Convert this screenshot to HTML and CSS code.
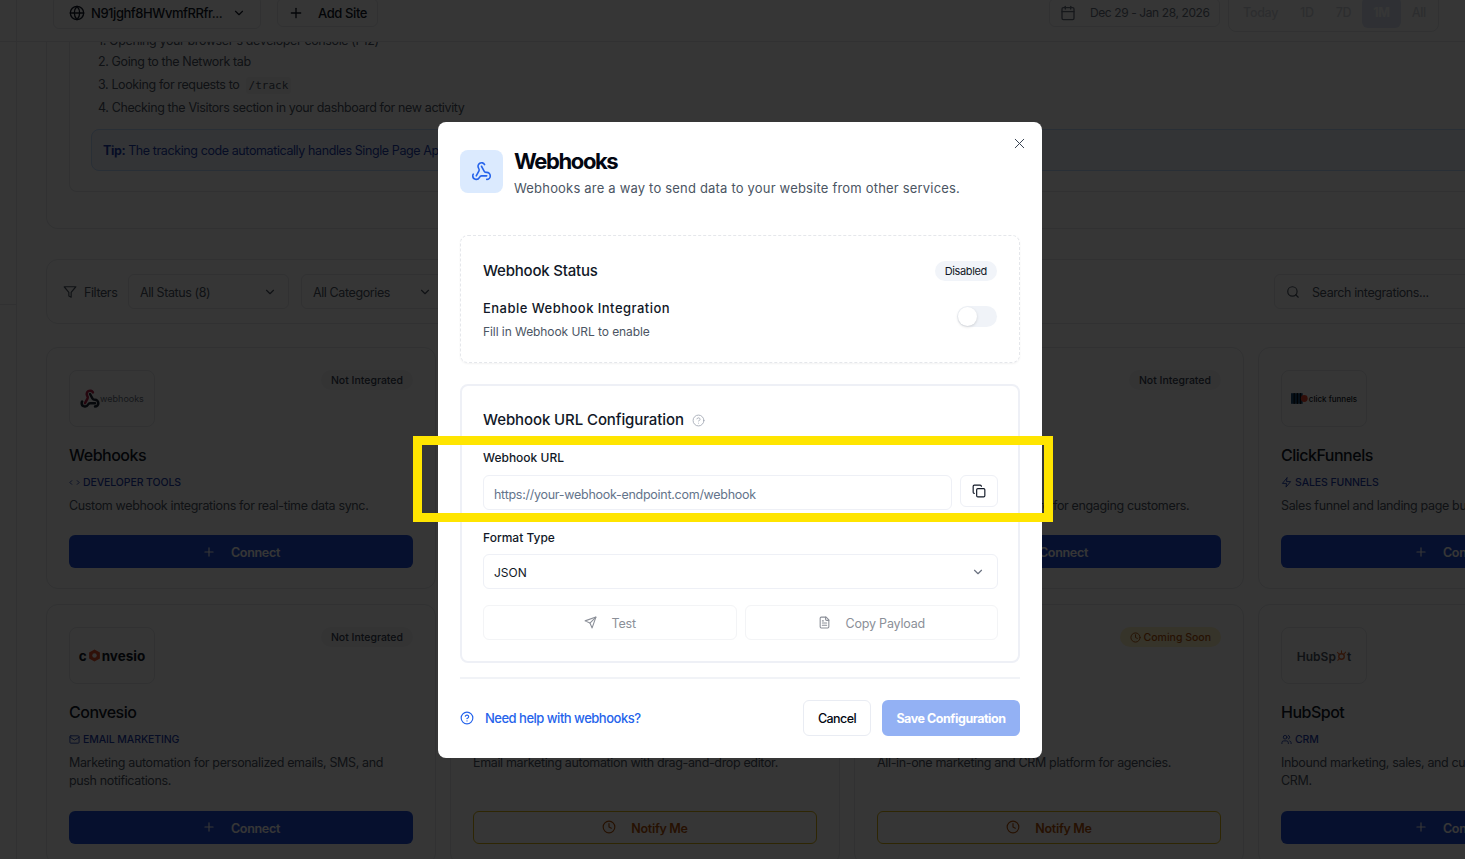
FILE: index.html
```html
<!DOCTYPE html>
<html lang="en">
<head>
    <meta charset="UTF-8">
    <meta name="viewport" content="width=device-width, initial-scale=1.0">
    <title>Webhooks</title>
    <link rel="stylesheet" href="styles.css">
</head>
<body>
    <!-- Shared icons -->
    <svg class="icon-defs" aria-hidden="true">
        <symbol id="i-webhook" viewBox="0 0 24 24"><path d="M18 16.98h-5.99c-1.1 0-1.95.94-2.48 1.9A4 4 0 0 1 2 17c.01-.7.2-1.4.57-2"/><path d="m6 17 3.13-5.78c.53-.97.1-2.18-.5-3.1a4 4 0 1 1 6.89-4.06"/><path d="m12 6 3.13 5.73C15.66 12.7 16.9 13 18 13a4 4 0 0 1 0 8"/></symbol>
        <symbol id="i-help" viewBox="0 0 24 24"><circle cx="12" cy="12" r="10"/><path d="M9.09 9a3 3 0 0 1 5.83 1c0 2-3 3-3 3"/><path d="M12 17h.01"/></symbol>
        <symbol id="i-chevron" viewBox="0 0 24 24"><path d="m6 9 6 6 6-6"/></symbol>
        <symbol id="i-plus" viewBox="0 0 24 24"><path d="M5 12h14"/><path d="M12 5v14"/></symbol>
        <symbol id="i-clock" viewBox="0 0 24 24"><circle cx="12" cy="12" r="10"/><path d="M12 6v6l4 2"/></symbol>
        <symbol id="i-x" viewBox="0 0 24 24"><path d="M18 6 6 18"/><path d="m6 6 12 12"/></symbol>
    </svg>

    <div class="page">
        <aside class="rail"><div class="rail-top"></div><div class="rail-mid"></div></aside>
        <main class="main">
            <header class="topbar">
                <div class="site-select">
                    <svg class="ic16" viewBox="0 0 24 24"><circle cx="12" cy="12" r="10"/><path d="M12 2a14.5 14.5 0 0 0 0 20 14.5 14.5 0 0 0 0-20"/><path d="M2 12h20"/></svg>
                    <span class="site-name">N91jghf8HWvmfRRfr...</span>
                    <svg class="ic14"><use href="#i-chevron"/></svg>
                </div>
                <div class="add-site">
                    <svg class="ic16"><use href="#i-plus"/></svg>
                    <span>Add Site</span>
                </div>
                <div class="date-range">
                    <svg class="ic16" viewBox="0 0 24 24"><path d="M8 2v4"/><path d="M16 2v4"/><rect x="3" y="4" width="18" height="18" rx="2"/><path d="M3 10h18"/></svg>
                    <span>Dec 29 - Jan 28, 2026</span>
                </div>
                <div class="range-tabs">
                    <span class="range-tab">Today</span>
                    <span class="range-tab">1D</span>
                    <span class="range-tab">7D</span>
                    <span class="range-tab active">1M</span>
                    <span class="range-tab">All</span>
                </div>
            </header>

            <div class="content">
                <section class="setup-panel">
                    <div class="setup-inner">
                        <ol class="steps">
                            <li>1. Opening your browser's developer console (F12)</li>
                            <li>2. Going to the Network tab</li>
                            <li>3. Looking for requests to <code>/track</code></li>
                            <li>4. Checking the Visitors section in your dashboard for new activity</li>
                        </ol>
                        <div class="tip"><strong>Tip:</strong> The tracking code automatically handles Single Page Applications and route changes.</div>
                    </div>
                </section>

                <section class="filters">
                    <div class="filters-label">
                        <svg class="ic14" viewBox="0 0 24 24"><polygon points="22 3 2 3 10 12.46 10 19 14 21 14 12.46 22 3"/></svg>
                        <span>Filters</span>
                    </div>
                    <div class="filter-select status"><span>All Status (8)</span><svg class="ic14"><use href="#i-chevron"/></svg></div>
                    <div class="filter-select categories"><span>All Categories</span><svg class="ic14"><use href="#i-chevron"/></svg></div>
                    <div class="search">
                        <svg class="ic14" viewBox="0 0 24 24"><circle cx="11" cy="11" r="8"/><path d="m21 21-4.3-4.3"/></svg>
                        <span>Search integrations...</span>
                    </div>
                </section>

                <section class="grid">
                    <!-- Row 1 -->
                    <article class="card">
                        <div class="card-top">
                            <div class="logo">
                                <svg class="logo-hook" viewBox="0 0 24 24">
                                    <path d="M18 16.98h-5.99c-1.1 0-1.95.94-2.48 1.9A4 4 0 0 1 2 17c.01-.7.2-1.4.57-2"/>
                                    <path class="logo-hook-top" d="m6 17 3.13-5.78c.53-.97.1-2.18-.5-3.1a4 4 0 1 1 6.89-4.06"/>
                                    <path d="m12 6 3.13 5.73C15.66 12.7 16.9 13 18 13a4 4 0 0 1 0 8"/>
                                </svg>
                                <span class="logo-webhooks">webhooks</span>
                            </div>
                            <span class="badge">Not Integrated</span>
                        </div>
                        <h3>Webhooks</h3>
                        <div class="category">
                            <svg viewBox="0 0 24 24"><path d="m18 16 4-4-4-4"/><path d="m6 8-4 4 4 4"/></svg>
                            <span>DEVELOPER TOOLS</span>
                        </div>
                        <p>Custom webhook integrations for real-time data sync.</p>
                        <button class="connect"><svg class="ic14"><use href="#i-plus"/></svg><span>Connect</span></button>
                    </article>

                    <article class="card">
                        <div class="card-top"><div class="logo"></div></div>
                        <h3></h3>
                        <div class="category"></div>
                        <p></p>
                        <button class="connect"></button>
                    </article>

                    <article class="card">
                        <div class="card-top"><div class="logo"></div><span class="badge">Not Integrated</span></div>
                        <h3></h3>
                        <div class="category"></div>
                        <p>Live chat and support software for engaging customers.</p>
                        <button class="connect"><svg class="ic14"><use href="#i-plus"/></svg><span>Connect</span></button>
                    </article>

                    <article class="card">
                        <div class="card-top">
                            <div class="logo">
                                <svg class="logo-cf" viewBox="0 0 16 10"><rect x="0" y="0" width="11" height="10" fill="#1f4e79"/><path d="M3 0v10M6 0v10M9 0v10" stroke="#0b0b0b" stroke-width="1"/><circle cx="12.5" cy="5" r="3.2" fill="#e8452c"/></svg>
                                <span class="logo-clickfunnels">click funnels</span>
                            </div>
                            <span class="badge">Not Integrated</span>
                        </div>
                        <h3>ClickFunnels</h3>
                        <div class="category">
                            <svg viewBox="0 0 24 24"><path d="M13 2 3 14h9l-1 8 10-12h-9l1-8z"/></svg>
                            <span>SALES FUNNELS</span>
                        </div>
                        <p>Sales funnel and landing page builder.</p>
                        <button class="connect"><svg class="ic14"><use href="#i-plus"/></svg><span>Connect</span></button>
                    </article>

                    <!-- Row 2 -->
                    <article class="card">
                        <div class="card-top">
                            <div class="logo">
                                <span class="logo-convesio">c<svg class="logo-hex" viewBox="0 0 14 14"><path d="M7 .5 12.8 3.8v6.4L7 13.5 1.2 10.2V3.8z" fill="#e2502b"/><circle cx="7" cy="7" r="2.4" fill="#fff"/></svg>nvesio</span>
                            </div>
                            <span class="badge">Not Integrated</span>
                        </div>
                        <h3>Convesio</h3>
                        <div class="category">
                            <svg viewBox="0 0 24 24"><rect x="2" y="4" width="20" height="16" rx="2"/><path d="m22 7-8.97 5.7a1.94 1.94 0 0 1-2.06 0L2 7"/></svg>
                            <span>EMAIL MARKETING</span>
                        </div>
                        <p>Marketing automation for personalized emails, SMS, and push notifications.</p>
                        <button class="connect"><svg class="ic14"><use href="#i-plus"/></svg><span>Connect</span></button>
                    </article>

                    <article class="card">
                        <div class="card-top"><div class="logo"></div></div>
                        <h3></h3>
                        <div class="category"></div>
                        <p>Email marketing automation with drag-and-drop editor.</p>
                        <button class="notify"><svg class="ic14"><use href="#i-clock"/></svg><span>Notify Me</span></button>
                    </article>

                    <article class="card">
                        <div class="card-top">
                            <div class="logo"></div>
                            <span class="badge soon"><svg class="ic11"><use href="#i-clock"/></svg>Coming Soon</span>
                        </div>
                        <h3></h3>
                        <div class="category"></div>
                        <p>All-in-one marketing and CRM platform for agencies.</p>
                        <button class="notify"><svg class="ic14"><use href="#i-clock"/></svg><span>Notify Me</span></button>
                    </article>

                    <article class="card">
                        <div class="card-top">
                            <div class="logo">
                                <span class="logo-hubspot">HubSp<svg class="logo-sprocket" viewBox="0 0 16 18"><circle cx="8" cy="10.500" r="4" fill="none" stroke="#e8662c" stroke-width="2"/><path d="M8 6V2M5 13.5 2.5 16M11 7.5 14 4M5 7.5 2 4.500" stroke="#e8662c" stroke-width="1.5" fill="none"/></svg>t</span>
                            </div>
                            <span class="badge">Not Integrated</span>
                        </div>
                        <h3>HubSpot</h3>
                        <div class="category">
                            <svg viewBox="0 0 24 24"><path d="M16 21v-2a4 4 0 0 0-4-4H6a4 4 0 0 0-4 4v2"/><circle cx="9" cy="7" r="4"/><path d="M22 21v-2a4 4 0 0 0-3-3.87"/><path d="M16 3.13a4 4 0 0 1 0 7.75"/></svg>
                            <span>CRM</span>
                        </div>
                        <p>Inbound marketing, sales, and customer service platform CRM.</p>
                        <button class="connect"><svg class="ic14"><use href="#i-plus"/></svg><span>Connect</span></button>
                    </article>
                </section>
            </div>
        </main>
    </div>

    <!-- Dialog -->
    <div class="overlay">
        <div class="modal">
            <button class="modal-close"><svg><use href="#i-x"/></svg></button>
            <div class="modal-head">
                <div class="modal-icon"><svg viewBox="0 0 24 24"><use href="#i-webhook"/></svg></div>
                <div>
                    <h2>Webhooks</h2>
                    <p class="modal-sub">Webhooks are a way to send data to your website from other services.</p>
                </div>
            </div>

            <div class="status-card">
                <div class="row-between">
                    <h4>Webhook Status</h4>
                    <span class="pill">Disabled</span>
                </div>
                <div class="row-between enable-row">
                    <div>
                        <div class="enable-title">Enable Webhook Integration</div>
                        <div class="enable-note">Fill in Webhook URL to enable</div>
                    </div>
                    <div class="toggle"><span class="knob"></span></div>
                </div>
            </div>

            <div class="config-card">
                <h4 class="config-title">Webhook URL Configuration <svg class="config-help"><use href="#i-help"/></svg></h4>
                <label class="field-label">Webhook URL</label>
                <div class="url-row">
                    <div class="url-input">https://your-webhook-endpoint.com/webhook</div>
                    <button class="copy-btn">
                        <svg class="ic14" viewBox="0 0 24 24"><rect x="8" y="8" width="14" height="14" rx="2"/><path d="M4 16c-1.100 0-2-.9-2-2V4c0-1.100.9-2 2-2h10c1.100 0 2 .9 2 2"/></svg>
                    </button>
                </div>
                <label class="field-label format-label">Format Type</label>
                <div class="format-select"><span>JSON</span><svg class="ic14"><use href="#i-chevron"/></svg></div>
                <div class="action-row">
                    <button class="action-btn">
                        <svg class="ic13" viewBox="0 0 24 24"><path d="m22 2-7 20-4-9-9-4Z"/><path d="M22 2 11 13"/></svg>
                        <span>Test</span>
                    </button>
                    <button class="action-btn">
                        <svg class="ic13" viewBox="0 0 24 24"><path d="M15 2H6a2 2 0 0 0-2 2v16a2 2 0 0 0 2 2h12a2 2 0 0 0 2-2V7Z"/><path d="M14 2v4a2 2 0 0 0 2 2h4"/><path d="M16 13H8"/><path d="M16 17H8"/><path d="M10 9H8"/></svg>
                        <span>Copy Payload</span>
                    </button>
                </div>
            </div>

            <div class="modal-divider"></div>

            <div class="modal-foot">
                <a class="help-link" href="#"><svg class="ic14"><use href="#i-help"/></svg>Need help with webhooks?</a>
                <div class="foot-btns">
                    <button class="btn-cancel">Cancel</button>
                    <button class="btn-save">Save Configuration</button>
                </div>
            </div>
        </div>
    </div>

    <!-- Highlight frame from the annotated screenshot -->
    <div class="highlight"></div>
</body>
</html>
```

FILE: styles.css
```css
* {
    box-sizing: border-box;
}
html, body {
    margin: 0;
    height: 100%;
    overflow: hidden;
}
body {
    position: relative;
    background-color: #fff;
    color: #111827;
    font-family: "Inter", "Noto Sans", sans-serif;
    font-size: 13px;
}
h2, h3, h4, p, ol {
    margin: 0;
    padding: 0;
}
button {
    font-family: inherit;
}
svg {
    fill: none;
    stroke: currentColor;
    stroke-width: 2;
    stroke-linecap: round;
    stroke-linejoin: round;
    flex: none;
}
.icon-defs {
    display: none;
}
.ic16 { width: 16px; height: 16px; }
.ic14 { width: 14px; height: 14px; }
.ic13 { width: 13px; height: 13px; }
.ic11 { width: 11px; height: 11px; }

/* page behind the dialog */
.page {
    display: flex;
    height: 100vh;
}
.rail {
    width: 17px;
    flex: none;
    border-right: 1px solid #e5e7eb;
}
.rail-top {
    height: 42px;
    border-bottom: 1px solid #e5e7eb;
}
.rail-mid {
    height: 263px;
    border-bottom: 1px solid #e5e7eb;
}
.main {
    flex: 1;
    min-width: 0;
    display: flex;
    flex-direction: column;
}
.topbar {
    height: 42px;
    flex: none;
    display: flex;
    align-items: flex-end;
    padding: 0 26px 9px 36px;
    border-bottom: 1px solid #e5e7eb;
}
.site-select, .add-site, .date-range {
    display: flex;
    align-items: center;
    border: 1px solid #e5e7eb;
    border-radius: 6px;
    height: 33px;
    margin-bottom: 3px;
    font-size: 13px;
    font-weight: 500;
    color: #111827;
    white-space: nowrap;
}
.site-select {
    width: 208px;
    padding: 0 14px 0 15px;
    gap: 6px;
}
.site-name {
    flex: 1;
    letter-spacing: -.45px;
}
.add-site {
    width: 101px;
    height: 29px;
    margin-left: 16px;
    margin-bottom: 5px;
    padding-left: 10px;
    gap: 14px;
    letter-spacing: -.4px;
}
.date-range {
    width: 171px;
    height: 29px;
    margin-bottom: 5px;
    margin-left: auto;
    padding-left: 10px;
    gap: 14px;
    font-size: 12px;
    font-weight: 400;
    color: #6b7280;
    letter-spacing: -.4px;
}
.range-tabs {
    display: flex;
    align-items: flex-end;
    width: 211px;
    height: 40px;
    margin-left: 8px;
    padding: 0 0 3px 3px;
    border: 1px solid #e5e7eb;
    border-radius: 8px;
    color: #d1d5db;
    font-size: 12.5px;
    font-weight: 500;
    letter-spacing: -.3px;
}
.range-tab {
    height: 31px;
    display: flex;
    align-items: center;
    padding: 0 11px;
}
.range-tab.active {
    background-color: #dbe4f5;
    border-radius: 6px;
    color: #fff;
    font-weight: 700;
}

.content {
    flex: 1;
    overflow: hidden;
    padding-left: 29px;
}
.setup-panel {
    width: 1602px;
    padding: 0 22px 36px;
    border: 1px solid #e5e7eb;
    border-top: none;
    border-radius: 0 0 12px 12px;
}
.setup-inner {
    padding: 0 21px 20px;
    border: 1px solid #e5e7eb;
    border-top: none;
    border-radius: 0 0 8px 8px;
}
.steps {
    list-style: none;
    margin-top: -12.5px;
    padding-left: 7px;
    color: #4b5563;
    font-size: 12.5px;
    line-height: 21px;
    letter-spacing: -.38px;
}
.steps li {
    height: 21px;
}
.steps li + li + li {
    margin-top: 2px;
}
.steps code {
    margin-left: 3px;
    padding: 2px 3px;
    background-color: #f3f4f6;
    border-radius: 3px;
    font-family: "DejaVu Sans Mono", monospace;
    font-size: 11px;
    letter-spacing: 0;
}
.tip {
    display: flex;
    gap: 3px;
    align-items: center;
    height: 42px;
    margin-top: 11.5px;
    padding: 0 11px;
    background-color: #eff6ff;
    border: 1px solid #bfdbfe;
    border-radius: 8px;
    color: #1e40af;
    font-size: 12.5px;
    letter-spacing: -.4px;
    white-space: nowrap;
}
.tip strong {
    font-weight: 700;
}

.filters {
    width: 1602px;
    display: flex;
    align-items: center;
    height: 65px;
    margin-top: 30px;
    padding: 0 16px;
    border: 1px solid #e5e7eb;
    border-radius: 12px;
    color: #4b5563;
    font-size: 12.5px;
    letter-spacing: -.4px;
}
.filters span {
    padding-top: 2px;
}
.filters-label {
    display: flex;
    align-items: center;
    gap: 7px;
    width: 65px;
}
.filter-select {
    display: flex;
    align-items: center;
    justify-content: space-between;
    height: 35px;
    padding: 0 11px;
    border: 1px solid #e5e7eb;
    border-radius: 6px;
}
.filter-select.status { width: 161px; }
.filter-select.categories { width: 143px; margin-left: 12px; }
.search {
    display: flex;
    align-items: center;
    gap: 12px;
    width: 300px;
    height: 35px;
    margin-left: 830px;
    padding-left: 11px;
    border: 1px solid #e5e7eb;
    border-radius: 6px;
}

.grid {
    display: grid;
    grid-template-columns: repeat(4, 390px);
    gap: 15px 14px;
    margin-top: 23px;
}
.card {
    display: flex;
    flex-direction: column;
    padding: 22px 22px 20px;
    border: 1px solid #e5e7eb;
    border-radius: 12px;
}
.card-top {
    display: flex;
    justify-content: space-between;
    align-items: flex-start;
    height: 57px;
}
.logo {
    display: flex;
    align-items: center;
    justify-content: center;
    width: 86px;
    height: 57px;
    border: 1px solid #e5e7eb;
    border-radius: 8px;
}
.logo-hook {
    width: 20px;
    height: 20px;
    color: #1f2937;
    stroke-width: 3;
}
.logo-hook-top {
    stroke: #b5234a;
}
.logo-webhooks {
    font-size: 9px;
    color: #6b7280;
}
.logo-cf {
    width: 17px;
    height: 11px;
    stroke: none;
    margin-right: 1px;
}
.logo-clickfunnels {
    font-size: 8px;
    font-weight: 500;
    color: #111827;
}
.logo-convesio {
    display: flex;
    align-items: center;
    font-size: 13.5px;
    font-weight: 700;
    color: #111827;
}
.logo-hex {
    width: 13px;
    height: 13px;
    stroke: none;
    margin: 0 1px;
}
.logo-hubspot {
    display: flex;
    align-items: flex-end;
    font-size: 12px;
    font-weight: 600;
    color: #4b5563;
}
.logo-sprocket {
    width: 11px;
    height: 17px;
    stroke: none;
}
.badge {
    display: inline-flex;
    align-items: center;
    gap: 3px;
    height: 20px;
    padding: 0 10px;
    background-color: #f3f4f6;
    border-radius: 10px;
    font-size: 10.5px;
    font-weight: 500;
    color: #374151;
}
.badge.soon {
    background-color: #fef3c7;
    color: #b45309;
}
.card h3 {
    height: 24px;
    margin-top: 16px;
    font-size: 16px;
    font-weight: 500;
    line-height: 24px;
    letter-spacing: -.5px;
    color: #111827;
}
.category {
    display: flex;
    align-items: center;
    gap: 3px;
    height: 16px;
    margin-top: 7px;
    font-size: 10.5px;
    font-weight: 500;
    letter-spacing: -.1px;
    color: #1e40af;
}
.category svg {
    width: 11px;
    height: 11px;
}
.card p {
    min-height: 18.5px;
    margin-top: 6.5px;
    margin-bottom: 20px;
    font-size: 12.5px;
    line-height: 18.5px;
    letter-spacing: -.35px;
    color: #4b5563;
}
.connect, .notify {
    display: flex;
    align-items: center;
    justify-content: center;
    gap: 15px;
    height: 33px;
    margin-top: auto;
    border-radius: 6px;
    font-size: 12.5px;
    font-weight: 600;
    letter-spacing: -.3px;
}
.connect span, .notify span {
    padding-top: 2px;
}
.connect {
    background-color: #1d4ed8;
    border: none;
    color: #fff;
}
.notify {
    background-color: transparent;
    border: 1px solid #d9b310;
    color: #b45309;
}

/* dialog */
.overlay {
    position: absolute;
    inset: 0;
    padding: 122px 0 0 438px;
    background-color: rgba(0, 0, 0, .79);
}
.modal {
    position: relative;
    width: 604px;
    padding: 25px 22px 22px;
    background-color: #fff;
    border-radius: 8px;
}
.modal-close {
    position: absolute;
    top: 13px;
    right: 14px;
    padding: 0;
    display: flex;
    background: none;
    border: none;
    color: #374151;
}
.modal-close svg {
    width: 17px;
    height: 17px;
    stroke-width: 1.4;
}
.modal-head {
    display: flex;
    gap: 11px;
    margin-bottom: 37px;
}
.modal-icon {
    display: flex;
    align-items: center;
    justify-content: center;
    width: 43px;
    height: 43px;
    margin-top: 3px;
    background-color: #dbeafe;
    border-radius: 8px;
    color: #2563eb;
}
.modal-icon svg {
    width: 21px;
    height: 21px;
    stroke-width: 1.8;
}
.modal h2 {
    font-size: 22px;
    font-weight: 700;
    line-height: 28px;
    letter-spacing: -1.4px;
    color: #030712;
}
.modal-sub {
    margin-top: 3px;
    font-size: 13px;
    line-height: 20px;
    letter-spacing: .19px;
    color: #4b5563;
}
.status-card {
    height: 128px;
    padding: 24px 22px 0;
    border: 1px dashed #e5e7eb;
    border-radius: 8px;
    box-shadow: 0 1px 2px rgba(0, 0, 0, .05);
}
.row-between {
    display: flex;
    align-items: center;
    justify-content: space-between;
}
.modal h4 {
    padding-top: 1px;
    font-size: 15px;
    font-weight: 500;
    line-height: 20px;
    letter-spacing: -.2px;
    color: #111827;
}
.pill {
    display: flex;
    align-items: center;
    height: 20px;
    padding: 0 10px;
    background-color: #f1f4f9;
    border-radius: 10px;
    font-size: 11px;
    font-weight: 400;
    letter-spacing: -.35px;
    color: #111827;
}
.enable-row {
    margin-top: 17px;
}
.enable-title {
    font-size: 13px;
    font-weight: 500;
    line-height: 20px;
    letter-spacing: .47px;
    color: #111827;
}
.enable-note {
    margin-top: 4px;
    padding-top: 1px;
    font-size: 12px;
    line-height: 18px;
    letter-spacing: -.07px;
    color: #4b5563;
}
.toggle {
    align-self: flex-start;
    width: 40px;
    height: 21px;
    margin-top: 8px;
    padding: 1px;
    background-color: #f0f3f8;
    border-radius: 11px;
}
.knob {
    display: block;
    width: 19px;
    height: 19px;
    background-color: #fff;
    border-radius: 50%;
    box-shadow: 0 1px 3px rgba(0, 0, 0, .15);
}
.config-card {
    height: 279px;
    margin-top: 21px;
    padding: 21px 20px 0 21px;
    border: 2px solid #eef0f6;
    border-radius: 8px;
}
.modal .config-title {
    display: flex;
    align-items: center;
    gap: 8px;
    line-height: 24px;
    letter-spacing: -.1px;
}
.config-help {
    width: 13px;
    height: 13px;
    color: #9ca3af;
    stroke-width: 1.5;
}
.field-label {
    display: block;
    margin-top: 17px;
    font-size: 12px;
    font-weight: 500;
    line-height: 18px;
    color: #111827;
}
.url-row {
    display: flex;
    gap: 8px;
    align-items: flex-start;
    margin-top: 8px;
}
.url-input {
    flex: 1;
    display: flex;
    align-items: center;
    height: 35px;
    padding: 3px 0 0 10px;
    border: 1px solid #eef0f6;
    border-radius: 6px;
    font-size: 12.5px;
    letter-spacing: -.27px;
    color: #64748b;
}
.copy-btn {
    display: flex;
    align-items: center;
    justify-content: center;
    width: 38px;
    height: 32px;
    padding: 0;
    background: #fff;
    border: 1px solid #eef0f6;
    border-radius: 6px;
    color: #111827;
}
.format-label {
    margin-top: 19px;
}
.format-select {
    display: flex;
    align-items: center;
    justify-content: space-between;
    height: 35px;
    margin-top: 7px;
    padding: 0 12px 0 10px;
    border: 1px solid #eef0f6;
    border-radius: 6px;
    font-size: 12px;
    color: #111827;
}
.format-select span {
    padding-top: 2px;
}
.format-select svg {
    color: #6b7280;
}
.action-row {
    display: grid;
    grid-template-columns: 1fr 1fr;
    gap: 8px;
    margin-top: 16px;
}
.action-btn {
    display: flex;
    align-items: center;
    justify-content: center;
    gap: 15px;
    height: 35px;
    padding: 0;
    background: #fff;
    border: 1px solid #f3f4f6;
    border-radius: 6px;
    font-size: 12.5px;
    letter-spacing: -.2px;
    color: #8b8f98;
}
.action-btn span {
    padding-top: 2px;
}
.modal-divider {
    height: 2px;
    margin-top: 14px;
    background-color: #f1f3f7;
}
.modal-foot {
    display: flex;
    align-items: center;
    justify-content: space-between;
    margin-top: 21px;
}
.help-link {
    display: flex;
    align-items: center;
    gap: 11px;
    font-size: 13px;
    font-weight: 500;
    letter-spacing: -.5px;
    color: #2563eb;
    text-decoration: none;
}
.foot-btns {
    display: flex;
    gap: 11px;
}
.btn-cancel, .btn-save {
    height: 36px;
    border-radius: 6px;
    font-size: 12.5px;
    font-weight: 500;
}
.btn-cancel {
    width: 68px;
    background: #fff;
    border: 1px solid #e9ecf3;
    letter-spacing: -.6px;
    color: #030712;
}
.btn-save {
    width: 138px;
    background-color: #93b1f4;
    border: none;
    letter-spacing: -.45px;
    color: #fff;
    font-weight: 700;
}

.highlight {
    position: absolute;
    left: 413px;
    top: 436px;
    width: 640px;
    height: 86px;
    border: 9px solid #ffe500;
}
```
